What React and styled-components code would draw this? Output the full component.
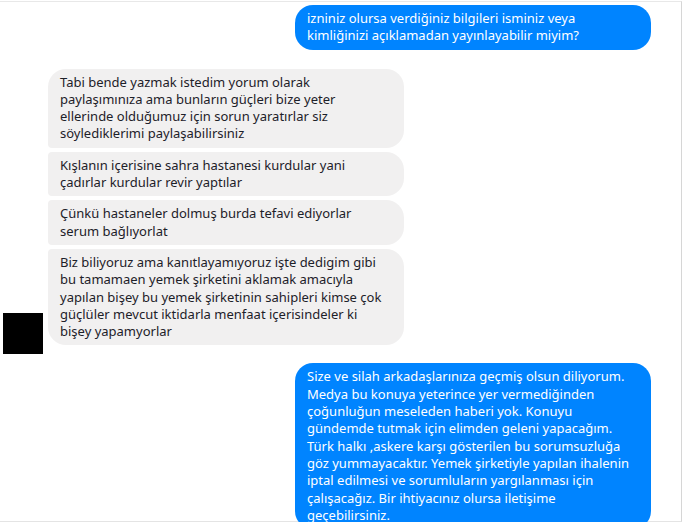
import React from 'react';
import styled, { createGlobalStyle } from 'styled-components';

const GlobalStyle = createGlobalStyle`
  html, body {
    margin: 0;
    padding: 0;
    background: #fff;
    overflow: hidden;
  }
`;

const Frame = styled.div`
  box-sizing: border-box;
  width: 682px;
  height: 521px;
  margin-top: 1px;
  border-top: 1px solid #e8e8e8;
  border-right: 1px solid #d6d6d6;
  border-bottom: 1px solid #e4e4e4;
  padding: 3px 30px 0 3px;
  display: flex;
  flex-direction: column;
  font-family: "Noto Sans", "Open Sans", sans-serif;
  font-size: 13px;
  line-height: 17.3px;
`;

const OutRow = styled.div`
  display: flex;
  justify-content: flex-end;
  margin-top: ${p => p.$top || 0}px;
`;

const InRow = styled.div`
  display: flex;
  align-items: flex-end;
  gap: 5px;
  margin-top: ${p => p.$top || 0}px;
`;

const Avatar = styled.div`
  width: 40px;
  height: 41px;
  background: #000;
  flex-shrink: 0;
`;

const Stack = styled.div`
  display: flex;
  flex-direction: column;
  gap: 4px;
  margin-bottom: 9px;
`;

const Bubble = styled.div`
  box-sizing: border-box;
  width: 356px;
  padding: 5px 13.5px 5px 12px;
  border-radius: 18px;
  background: ${p => (p.$out ? '#0084ff' : '#f1f0f0')};
  color: ${p => (p.$out ? '#fff' : '#1d2129')};
  ${p => p.$first && 'border-bottom-left-radius: 4px;'}
  ${p => p.$mid && 'border-top-left-radius: 4px; border-bottom-left-radius: 4px;'}
  ${p => p.$last && 'border-top-left-radius: 4px;'}
`;

const incoming = [
  'Tabi bende yazmak istedim yorum olarak paylaşımınıza ama bunların güçleri bize yeter ellerinde olduğumuz için sorun yaratırlar siz söylediklerimi paylaşabilirsiniz',
  'Kışlanın içerisine sahra hastanesi kurdular yani çadırlar kurdular revir yaptılar',
  'Çünkü hastaneler dolmuş burda tefavi ediyorlar serum bağlıyorlat',
  'Biz biliyoruz ama kanıtlayamıyoruz işte dedigim gibi bu tamamaen yemek şirketini aklamak amacıyla yapılan bişey bu yemek şirketinin sahipleri kimse çok güçlüler mevcut iktidarla menfaat içerisindeler ki bişey yapamyorlar',
];

export default function App() {
  return (
    <>
      <GlobalStyle />
      <Frame>
        <OutRow>
          <Bubble $out>
            izniniz olursa verdiğiniz bilgileri isminiz veya kimliğinizi açıklamadan yayınlayabilir miyim?
          </Bubble>
        </OutRow>
        <InRow $top={19}>
          <Avatar />
          <Stack>
            {incoming.map((t, i) => (
              <Bubble
                key={i}
                $first={i === 0}
                $mid={i > 0 && i < incoming.length - 1}
                $last={i === incoming.length - 1}
              >
                {t}
              </Bubble>
            ))}
          </Stack>
        </InRow>
        <OutRow $top={9}>
          <Bubble $out>
            Size ve silah arkadaşlarınıza geçmiş olsun diliyorum. Medya bu konuya yeterince yer vermediğinden çoğunluğun meseleden haberi yok. Konuyu gündemde tutmak için elimden geleni yapacağım. Türk halkı ,askere karşı gösterilen bu sorumsuzluğa göz yummayacaktır. Yemek şirketiyle yapılan ihalenin iptal edilmesi ve sorumluların yargılanması için çalışacağız. Bir ihtiyacınız olursa iletişime geçebilirsiniz.
          </Bubble>
        </OutRow>
      </Frame>
    </>
  );
}
